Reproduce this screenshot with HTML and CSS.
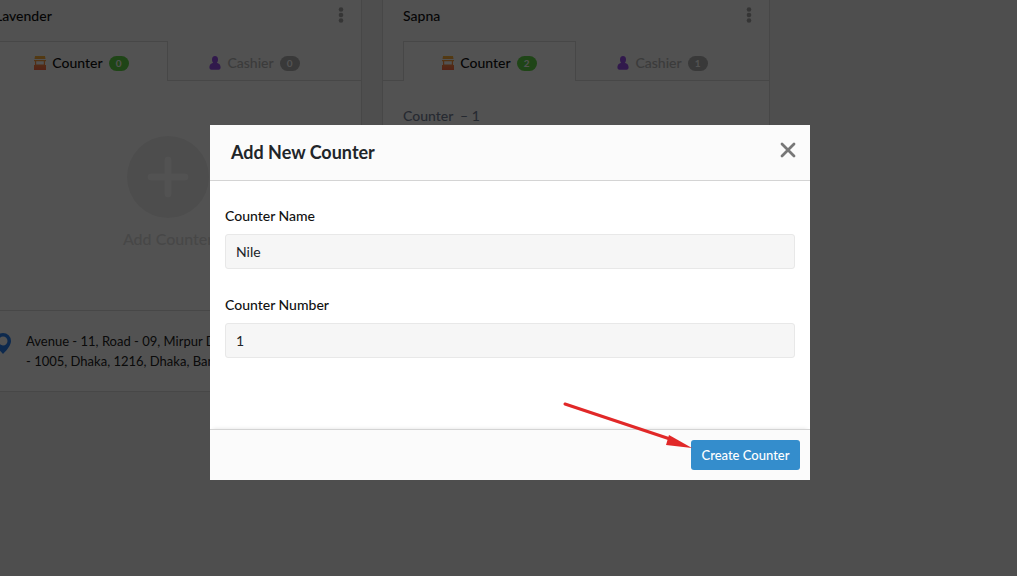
FILE: index.html
```html
<!DOCTYPE html>
<html lang="en">
<head>
<meta charset="utf-8">
<meta name="viewport" content="width=device-width, initial-scale=1">
<title>Add New Counter</title>
<link rel="stylesheet" href="styles.css">
</head>
<body>
<svg width="0" height="0" class="defs" aria-hidden="true">
  <defs>
    <linearGradient id="booth-fill" x1="0" y1="0" x2="0" y2="14" gradientUnits="userSpaceOnUse">
      <stop offset="0" stop-color="#ffb83a"/><stop offset="1" stop-color="#ff6a4a"/>
    </linearGradient>
    <symbol id="booth" viewBox="0 0 12 14">
      <path fill="url(#booth-fill)" fill-rule="evenodd" d="M1 0h10l.5 3H.5zM0 4h12v1.200h-1V9h1v5H0V9h1V5.200H0zM2.200 5.200V8.500h7.600V5.200z"/>
    </symbol>
    <symbol id="person" viewBox="0 0 12 14">
      <path fill="#9a50ec" d="M6 0c2 0 3 1.500 3 3.500 0 1.500-.4 2.600-1.200 3.300C10.200 7.400 11.600 9 11.600 11.300c0 1.600-.7 2.500-2 2.500H2.400c-1.300 0-2-.9-2-2.500C.4 9 1.800 7.400 4.200 6.800 3.400 6.100 3 5 3 3.500 3 1.500 4 0 6 0z"/>
    </symbol>
    <symbol id="dots" viewBox="0 0 6 16">
      <g fill="#a6a6a6"><circle cx="3" cy="2.500" r="2.300"/><circle cx="3" cy="8" r="2.300"/><circle cx="3" cy="13.500" r="2.300"/></g>
    </symbol>
  </defs>
</svg>
<main class="board">
  <article class="card">
    <header class="card-head">
      <div class="card-title"><h2>Lavender</h2><button class="menu" aria-label="Lavender options"><svg width="6" height="16"><use href="#dots"/></svg></button></div>
      <nav class="tabs">
        <button class="tab active"><svg width="12" height="14"><use href="#booth"/></svg><span>Counter</span><span class="badge">0</span></button>
        <button class="tab"><svg width="12" height="14"><use href="#person"/></svg><span>Cashier</span><span class="badge">0</span></button>
      </nav>
    </header>
    <div class="card-body">
      <button class="add">
        <svg width="82" height="82" viewBox="0 0 82 82"><circle cx="41" cy="41" r="41" fill="#f0f0f0"/><path d="M41 24v34M24 41h34" stroke="#fff" stroke-width="6.500" stroke-linecap="round"/></svg>
        <span>Add Counter</span>
      </button>
    </div>
    <footer class="card-foot">
      <svg class="pin" width="16" height="22" viewBox="0 0 16 22"><path fill="#2a80f0" fill-rule="evenodd" d="M8 0a8 8 0 0 1 8 8c0 4-3.500 8.500-8 13C3.500 16.500 0 12 0 8a8 8 0 0 1 8-8zm0 3.500a4.500 4.500 0 1 0 0 9 4.500 4.500 0 0 0 0-9z"/></svg>
      <address>Avenue - 11, Road - 09, Mirpur DOHS<br>- 1005, Dhaka, 1216, Dhaka, Bangladesh</address>
    </footer>
  </article>
  <article class="card">
    <header class="card-head">
      <div class="card-title"><h2>Sapna</h2><button class="menu" aria-label="Sapna options"><svg width="6" height="16"><use href="#dots"/></svg></button></div>
      <nav class="tabs">
        <button class="tab active"><svg width="12" height="14"><use href="#booth"/></svg><span>Counter</span><span class="badge">2</span></button>
        <button class="tab"><svg width="12" height="14"><use href="#person"/></svg><span>Cashier</span><span class="badge">1</span></button>
      </nav>
    </header>
    <div class="card-body list"><p>Counter &nbsp;– 1</p></div>
  </article>
</main>

<div class="overlay">
  <form class="modal" role="dialog" aria-labelledby="modal-title">
    <header class="modal-head">
      <h1 id="modal-title">Add New Counter</h1>
      <button type="button" class="close" aria-label="Close"><svg width="16" height="16" viewBox="0 0 16 16"><path d="M2 2l12 12M14 2L2 14" stroke="#777" stroke-width="2.800" stroke-linecap="round"/></svg></button>
    </header>
    <div class="modal-body">
      <div class="field"><label for="name">Counter Name</label><input id="name" type="text" value="Nile"></div>
      <div class="field"><label for="number">Counter Number</label><input id="number" type="text" value="1"></div>
    </div>
    <footer class="modal-foot">
      <button type="button" class="primary">Create Counter</button>
      <svg class="arrow" width="130" height="50" viewBox="0 0 130 50" aria-hidden="true"><path d="M3 3L108 38" stroke="#e12828" stroke-width="3" stroke-linecap="round"/><path d="M107 34L130 47L104 44z" fill="#e12828"/></svg>
    </footer>
  </form>
</div>
</body>
</html>
```
FILE: styles.css
```css
* { box-sizing: border-box; }
body {
  margin: 0;
  min-height: 100vh;
  overflow: hidden;
  background: #f2f2f2;
  color: #212529;
  font-family: Lato, "Liberation Sans", sans-serif;
  font-size: 14px;
  line-height: 20px;
}
h1, h2, p { margin: 0; }
button, input { font: inherit; color: inherit; }
button { border: 0; padding: 0; background: none; cursor: pointer; }
svg { display: block; flex: none; fill: none; }
.defs { position: absolute; }

.board { display: flex; gap: 20px; margin-left: -26px; }
.card {
  display: flex;
  flex-direction: column;
  flex: 0 0 388px;
  background: #fff;
  border: 1px solid #dedede;
  border-top: 0;
}
.card-head { padding: 6px 17px 0 20px; background: #fafafa; border-bottom: 1px solid #dedede; }
.card-title { display: flex; align-items: flex-start; justify-content: space-between; margin-bottom: 15px; }
.card-title h2 { font-size: 14px; line-height: 20px; font-weight: 500; color: #111; }
.menu { padding-top: 1px; }
.tabs { display: flex; margin-bottom: -1px; }
.tab {
  display: flex;
  align-items: center;
  justify-content: center;
  width: 173px;
  height: 40px;
  border: 1px solid transparent;
  border-bottom: 0;
  padding-top: 2px;
  color: #b8b8b8;
  font-weight: 500;
}
.tab.active { background: #fff; border-color: #dedede; color: #111; }
.tab svg { margin-right: 6px; }
.badge {
  width: 20px;
  height: 15px;
  margin: 2px 0 0 6px;
  border-radius: 8px;
  background: #b0b0b0;
  color: #fff;
  font-size: 10px;
  font-weight: 700;
  line-height: 15px;
}
.active .badge { background: #62d548; }
.card-body { flex: 1; padding: 55px 20px 61px; }
.card-body.list { padding-top: 25px; color: #78839a; font-weight: 500; }
.add { display: flex; flex-direction: column; align-items: center; gap: 11px; margin: 0 auto; color: #dcdcdc; font-size: 16px; font-weight: 500; }
.card-foot { display: flex; gap: 15px; padding: 20px; border-top: 1px solid #dedede; }
.pin { margin-top: 2px; }
.card-foot address { font-size: 13px; font-style: normal; white-space: nowrap; color: #222; }

.overlay {
  position: fixed;
  inset: 0;
  display: flex;
  justify-content: center;
  align-items: flex-start;
  padding: 125px 0 0 3px;
  background: rgba(0, 0, 0, 0.68);
}
.modal { width: 600px; background: #fff; }
.modal-head {
  display: flex;
  justify-content: space-between;
  padding: 17px 14px 18px 21px;
  background: #fbfbfb;
  border-bottom: 1px solid #d4d4d4;
}
.modal-head h1 { font-size: 18px; line-height: 20px; font-weight: 700; }
.close { height: 16px; }
.modal-body { display: flex; flex-direction: column; gap: 26px; padding: 25px 15px 71px; }
.field { display: flex; flex-direction: column; gap: 8px; }
.field label { font-weight: 500; color: #111; }
.field input {
  width: 100%;
  height: 35px;
  padding: 0 10px;
  border: 1px solid #e8e8e8;
  border-radius: 3px;
  background: #f6f6f6;
  outline: 0;
}
.modal-foot {
  position: relative;
  display: flex;
  justify-content: flex-end;
  padding: 10px;
  background: #fbfbfb;
  border-top: 1px solid #d4d4d4;
  box-shadow: 0 -3px 4px -3px rgba(0, 0, 0, 0.12);
}
.primary { min-width: 109px; height: 30px; padding: 0 10px; border-radius: 3px; background: #348dcc; color: #fff; font-size: 13px; font-weight: 500; }
.arrow { position: absolute; right: 118px; bottom: 29px; }
```
